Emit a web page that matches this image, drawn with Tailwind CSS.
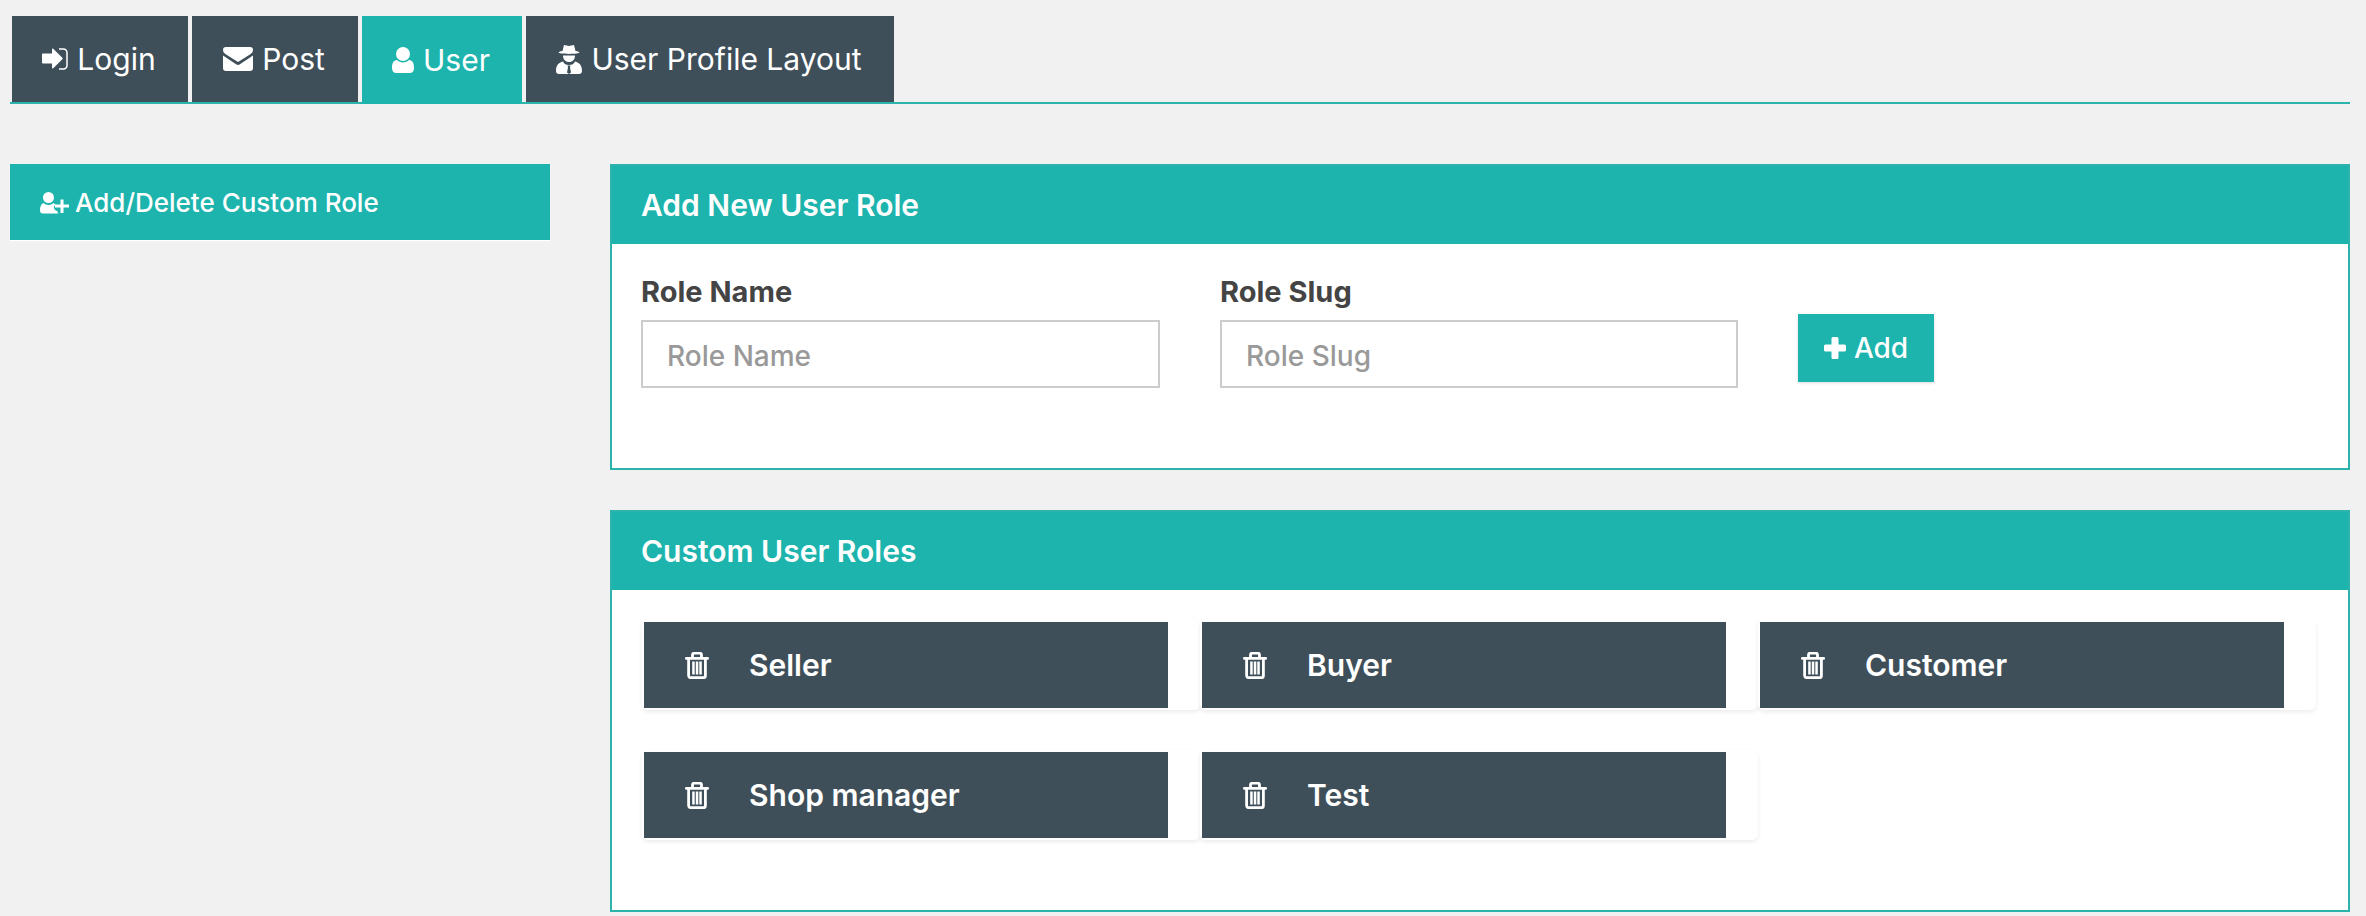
<!DOCTYPE html>
<html lang="en">
<head>
    <meta charset="UTF-8">
    <title>User Roles</title>
    <script src="https://cdn.jsdelivr.net/npm/@tailwindcss/browser@4"></script>
</head>
<body class="h-screen overflow-hidden bg-[#f1f1f1] pt-[16px] pl-[10px] pr-[16px] font-['Inter',sans-serif] text-white">
    <!-- Tabs -->
    <nav class="flex gap-[4px] h-[88px] pl-[2px] border-b-2 border-[#2bb3ac]">
        <a class="flex items-center justify-center gap-[9px] w-[176px] h-[86px] pr-[2px] bg-[#3f4f5a] text-[30px]">
            <svg class="w-[26px] h-[22px] fill-white" viewBox="0 0 26 22"><path d="M.8 5.500H10V1.500c0-.8.900-1.200 1.500-.6l8.800 8.800c.5.500.5 1.100 0 1.600l-8.800 8.800c-.6.600-1.500.200-1.500-.6v-4H.8c-.5 0-.8-.4-.8-.9V6.400c0-.5.300-.9.800-.9z"/><path d="M17 1h4.500A3.500 3.500 0 0 1 25 4.500v13a3.500 3.500 0 0 1-3.500 3.500H17" fill="none" stroke="#fff" stroke-width="1.500"/></svg>
            <span>Login</span>
        </a>
        <a class="flex items-center justify-center gap-[9px] w-[166px] h-[86px] pr-[2px] bg-[#3f4f5a] text-[30px]">
            <svg class="w-[30px] h-[24px] fill-white" viewBox="0 0 30 24"><path d="M3 0h24a3 3 0 0 1 3 3c0 1.500-1 3-2.300 3.900L15 15 2.300 6.900C1 6 0 4.500 0 3a3 3 0 0 1 3-3z"/><path d="M0 8.500V21a3 3 0 0 0 3 3h24a3 3 0 0 0 3-3V8.500l-13.500 9a3 3 0 0 1-3 0z"/></svg>
            <span>Post</span>
        </a>
        <a class="flex items-center justify-center gap-[9px] w-[160px] h-[88px] pr-[2px] bg-[#1db4ad] text-[30px]">
            <svg class="w-[22px] h-[26px] fill-white" viewBox="0 0 22 26"><circle cx="11" cy="7" r="7"/><path d="M5 13c1.500 1.500 3.500 2.500 6 2.500s4.500-1 6-2.500c3.500.3 5 3 5 8 0 3-1.500 5-4.500 5h-13C1.500 26 0 24 0 21c0-5 1.500-7.700 5-8z"/></svg>
            <span>User</span>
        </a>
        <a class="flex items-center justify-center gap-[9px] w-[368px] h-[86px] pr-[2px] bg-[#3f4f5a] text-[30px]">
            <svg class="w-[26px] h-[30px] fill-white" viewBox="0 0 26 30"><path d="M8 1l5 1 5-1 1.500 6c2.500.4 4 1 4 1.600 0 .8-4.800 1.400-10.500 1.400S2.500 9.400 2.500 8.600c0-.6 1.500-1.200 4-1.600z"/><path d="M7 11.500h12c0 4-2.500 6.500-6 6.500s-6-2.500-6-6.500z"/><path d="M7 17.500c-4.500 1-7 4-7 9.500 0 2 1.200 3 3 3h20c1.800 0 3-1 3-3 0-5.500-2.500-8.500-7-9.500-1 2.500-3 3.500-6 3.500s-5-1-6-3.500z"/><path d="M11.500 21.500h3l-.5 2 1 5-2 1.500-2-1.500 1-5z" fill="#3f4f5a"/></svg>
            <span>User Profile Layout</span>
        </a>
    </nav>

    <main class="flex mt-[60px]">
        <!-- Sidebar -->
        <aside class="w-[540px] shrink-0">
            <a class="flex items-center gap-[6px] h-[76px] pl-[30px] pt-[1px] bg-[#1db4ad] text-[26px] font-medium shadow-[0_1px_1px_#fff]">
                <svg class="w-[29px] h-[22px] fill-white" viewBox="0 0 29 22"><circle cx="8.500" cy="5.500" r="5.500"/><path d="M3.500 11c1.200 1.200 3 2 5 2s3.800-.8 5-2l2 1.500c-1 .8-1.500 1.800-1.500 3 0 2.200 1.800 3.500 3.500 3.500 0 1 .3 2 1 2.500H3c-2 0-3-1-3-3 0-4 1-6.500 3.500-7.500z"/><path d="M20.500 7.500h3v5H29v3h-5.500V21h-3v-5.500H15v-3h5.500z"/></svg>
                <span>Add/Delete Custom Role</span>
            </a>
        </aside>

        <div class="ml-[60px] w-[1740px] shrink-0">
            <!-- Add role form -->
            <section class="h-[306px] border-2 border-[#2bb3ac] bg-white">
                <h2 class="flex items-center h-[78px] pl-[29px] bg-[#1db4ad] text-[30px] font-semibold">Add New User Role</h2>
                <form class="flex gap-[60px] pt-[30px] pl-[29px]">
                    <div class="w-[519px]">
                        <label class="block h-[36px] mb-[10px] text-[29px] leading-[36px] font-bold text-[#444444]">Role Name</label>
                        <input type="text" placeholder="Role Name" class="w-full h-[68px] pl-[24px] pt-[4px] border-2 border-[#cccccc] text-[28px] font-medium text-[#444444] placeholder:text-[#999999] outline-none">
                    </div>
                    <div class="w-[518px]">
                        <label class="block h-[36px] mb-[10px] text-[29px] leading-[36px] font-bold text-[#444444]">Role Slug</label>
                        <input type="text" placeholder="Role Slug" class="w-full h-[68px] pl-[24px] pt-[4px] border-2 border-[#cccccc] text-[28px] font-medium text-[#444444] placeholder:text-[#999999] outline-none">
                    </div>
                    <button type="button" class="flex items-center justify-center gap-[8px] self-start mt-[40px] w-[136px] h-[68px] bg-[#1db4ad] text-[28px] font-medium shadow-[0_1px_3px_rgba(0,0,0,0.15)]">
                        <svg class="w-[22px] h-[22px] fill-white" viewBox="0 0 22 22"><path d="M7.500 1.500A1.500 1.500 0 0 1 9 0h4a1.500 1.500 0 0 1 1.500 1.500v6h6A1.500 1.500 0 0 1 22 9v4a1.500 1.500 0 0 1-1.500 1.500h-6v6A1.500 1.500 0 0 1 13 22H9a1.500 1.500 0 0 1-1.500-1.500v-6h-6A1.500 1.500 0 0 1 0 13V9a1.500 1.500 0 0 1 1.500-1.500h6z"/></svg>
                        <span>Add</span>
                    </button>
                </form>
            </section>

            <!-- Role list -->
            <section class="mt-[40px] h-[402px] border-2 border-[#2bb3ac] bg-white">
                <h2 class="flex items-center h-[78px] pl-[29px] bg-[#1db4ad] text-[30px] font-semibold">Custom User Roles</h2>
                <div class="grid grid-cols-[repeat(3,558px)] gap-y-[40px] pt-[30px] pl-[30px]">
                    <div class="h-[90px] p-[2px] rounded-[6px] bg-white shadow-[0_2px_4px_rgba(0,0,0,0.08)]">
                        <div class="flex items-center w-[524px] h-[86px] pl-[41px] bg-[#3f4f5a] text-[30px] font-semibold">
                            <svg class="w-[24px] h-[27px] mr-[40px]" viewBox="0 0 24 27"><path d="M1.300 6.300h21.400M7.500 6V3a2 2 0 0 1 2-2h5a2 2 0 0 1 2 2v3M3.600 7v16.500A2.300 2.300 0 0 0 5.900 25.700h12.200a2.300 2.300 0 0 0 2.300-2.300V7" fill="none" stroke="#fff" stroke-width="2.800" stroke-linecap="round"/><path d="M7.200 9.500h2.500v13H7.200zM10.800 9.500h2.500v13h-2.500zM14.300 9.500h2.500v13h-2.500z" fill="#fff"/></svg>
                            <span>Seller</span>
                        </div>
                    </div>
                    <div class="h-[90px] p-[2px] rounded-[6px] bg-white shadow-[0_2px_4px_rgba(0,0,0,0.08)]">
                        <div class="flex items-center w-[524px] h-[86px] pl-[41px] bg-[#3f4f5a] text-[30px] font-semibold">
                            <svg class="w-[24px] h-[27px] mr-[40px]" viewBox="0 0 24 27"><path d="M1.300 6.300h21.400M7.500 6V3a2 2 0 0 1 2-2h5a2 2 0 0 1 2 2v3M3.600 7v16.500A2.300 2.300 0 0 0 5.900 25.700h12.200a2.300 2.300 0 0 0 2.300-2.300V7" fill="none" stroke="#fff" stroke-width="2.800" stroke-linecap="round"/><path d="M7.200 9.500h2.500v13H7.200zM10.800 9.500h2.500v13h-2.500zM14.300 9.500h2.500v13h-2.500z" fill="#fff"/></svg>
                            <span>Buyer</span>
                        </div>
                    </div>
                    <div class="h-[90px] p-[2px] rounded-[6px] bg-white shadow-[0_2px_4px_rgba(0,0,0,0.08)]">
                        <div class="flex items-center w-[524px] h-[86px] pl-[41px] bg-[#3f4f5a] text-[30px] font-semibold">
                            <svg class="w-[24px] h-[27px] mr-[40px]" viewBox="0 0 24 27"><path d="M1.300 6.300h21.400M7.500 6V3a2 2 0 0 1 2-2h5a2 2 0 0 1 2 2v3M3.600 7v16.500A2.300 2.300 0 0 0 5.900 25.700h12.200a2.300 2.300 0 0 0 2.300-2.300V7" fill="none" stroke="#fff" stroke-width="2.800" stroke-linecap="round"/><path d="M7.200 9.500h2.500v13H7.200zM10.800 9.500h2.500v13h-2.500zM14.300 9.500h2.500v13h-2.500z" fill="#fff"/></svg>
                            <span>Customer</span>
                        </div>
                    </div>
                    <div class="h-[90px] p-[2px] rounded-[6px] bg-white shadow-[0_2px_4px_rgba(0,0,0,0.08)]">
                        <div class="flex items-center w-[524px] h-[86px] pl-[41px] bg-[#3f4f5a] text-[30px] font-semibold">
                            <svg class="w-[24px] h-[27px] mr-[40px]" viewBox="0 0 24 27"><path d="M1.300 6.300h21.400M7.500 6V3a2 2 0 0 1 2-2h5a2 2 0 0 1 2 2v3M3.600 7v16.500A2.300 2.300 0 0 0 5.900 25.700h12.200a2.300 2.300 0 0 0 2.300-2.300V7" fill="none" stroke="#fff" stroke-width="2.800" stroke-linecap="round"/><path d="M7.200 9.500h2.500v13H7.200zM10.800 9.500h2.500v13h-2.500zM14.300 9.500h2.500v13h-2.500z" fill="#fff"/></svg>
                            <span>Shop manager</span>
                        </div>
                    </div>
                    <div class="h-[90px] p-[2px] rounded-[6px] bg-white shadow-[0_2px_4px_rgba(0,0,0,0.08)]">
                        <div class="flex items-center w-[524px] h-[86px] pl-[41px] bg-[#3f4f5a] text-[30px] font-semibold">
                            <svg class="w-[24px] h-[27px] mr-[40px]" viewBox="0 0 24 27"><path d="M1.300 6.300h21.400M7.500 6V3a2 2 0 0 1 2-2h5a2 2 0 0 1 2 2v3M3.600 7v16.500A2.300 2.300 0 0 0 5.900 25.700h12.200a2.300 2.300 0 0 0 2.300-2.300V7" fill="none" stroke="#fff" stroke-width="2.800" stroke-linecap="round"/><path d="M7.200 9.500h2.500v13H7.200zM10.800 9.500h2.500v13h-2.500zM14.300 9.500h2.500v13h-2.500z" fill="#fff"/></svg>
                            <span>Test</span>
                        </div>
                    </div>
                </div>
            </section>
        </div>
    </main>
</body>
</html>
